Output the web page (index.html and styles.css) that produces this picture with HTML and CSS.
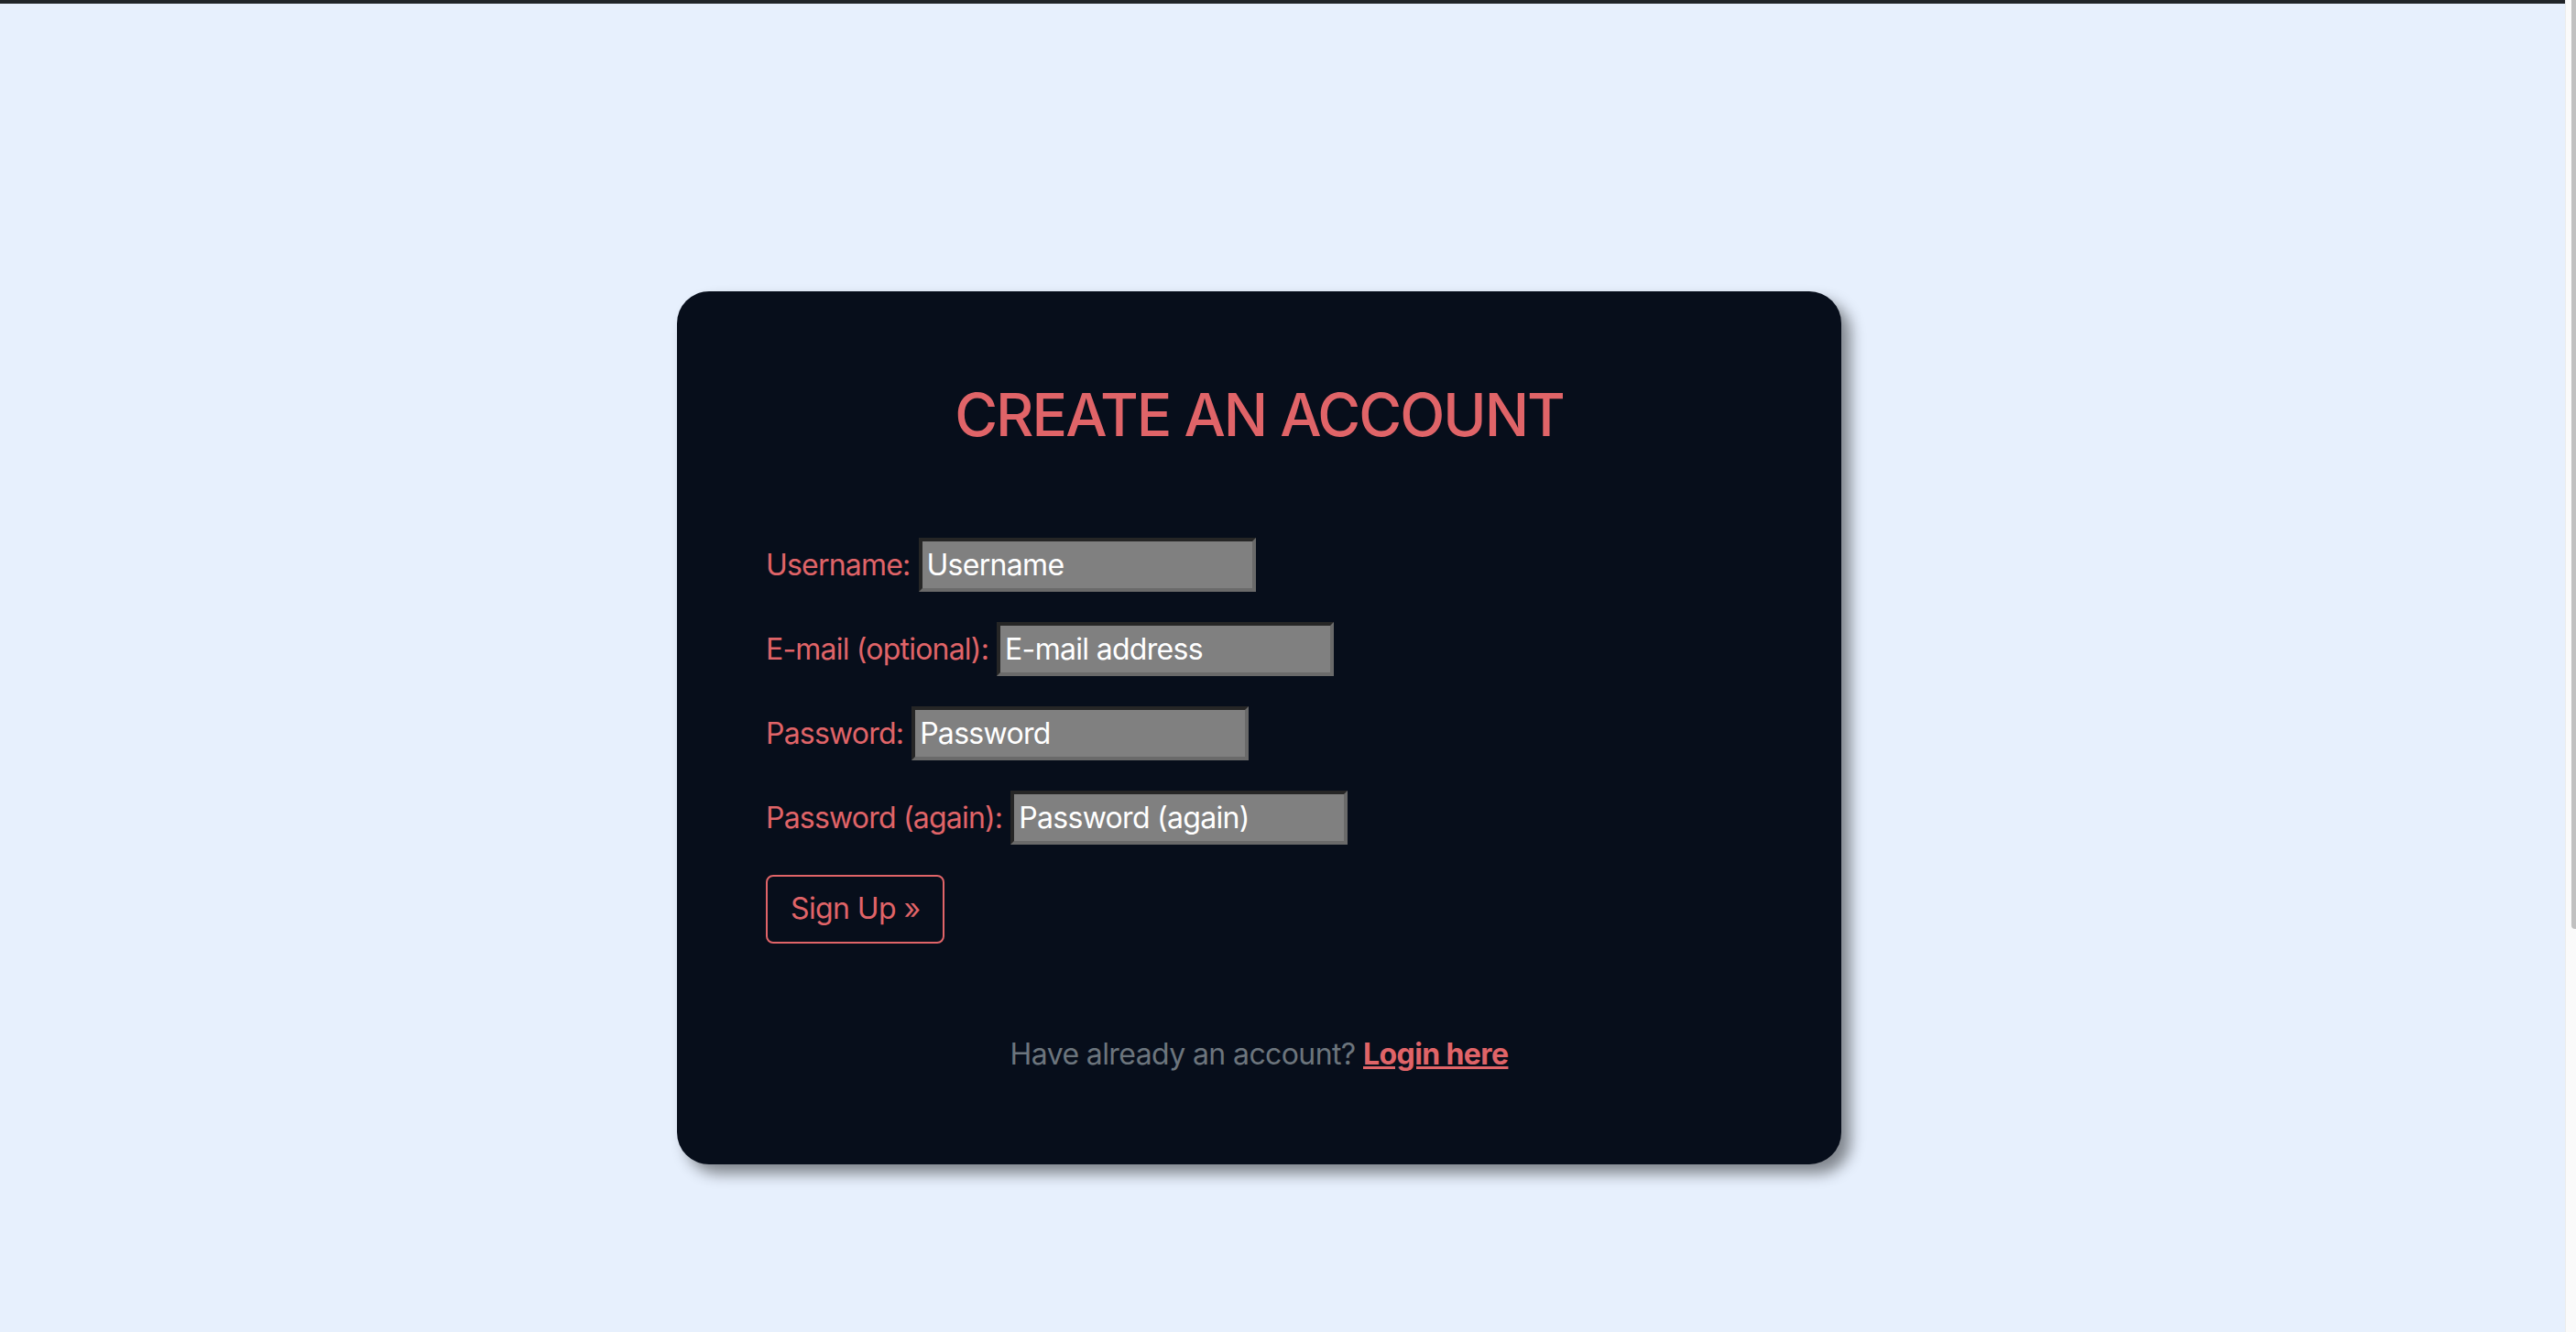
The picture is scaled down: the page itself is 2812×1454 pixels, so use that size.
FILE: index.html
```html
<!DOCTYPE html>
<html lang="en">
<head>
<meta charset="utf-8">
<title>Create an account</title>
<link rel="stylesheet" href="styles.css">
</head>
<body>
<div class="topbar"></div>
<main class="page">
  <section class="card">
    <h1 class="title">CREATE AN ACCOUNT</h1>
    <form class="form">
      <div class="row">
        <label class="label" for="u">Username:</label>
        <input class="field" id="u" type="text" value="Username">
      </div>
      <div class="row">
        <label class="label" for="e">E-mail (optional):</label>
        <input class="field" id="e" type="text" value="E-mail address">
      </div>
      <div class="row">
        <label class="label" for="p">Password:</label>
        <input class="field" id="p" type="text" value="Password">
      </div>
      <div class="row">
        <label class="label" for="p2">Password (again):</label>
        <input class="field" id="p2" type="text" value="Password (again)">
      </div>
      <div class="actions">
        <button class="btn" type="button">Sign Up &raquo;</button>
      </div>
    </form>
    <p class="footer">Have already an account? <a class="link" href="#">Login here</a></p>
  </section>
</main>
<div class="scrollbar"><div class="thumb"></div></div>
</body>
</html>
```
FILE: styles.css
```css
html, body {
  margin: 0;
  padding: 0;
}
body {
  background: #e7f0fd;
  font-family: Inter, "Noto Sans", "Liberation Sans", sans-serif;
  min-height: 1454px;
  overflow: hidden;
}
.topbar {
  height: 4px;
  background: #212529;
  margin-right: 12px;
}
.page {
  padding-top: 314px;
  padding-left: 739px;
}
.card {
  width: 1271px;
  box-sizing: border-box;
  background: #070e1b;
  border-radius: 35px;
  box-shadow: 10px 10px 16px rgba(0, 0, 0, 0.45);
  padding: 96px 97px 96px 97px;
}
.title {
  margin: 0;
  text-align: center;
  color: #e06468;
  font-size: 64px;
  font-weight: 500;
  line-height: 77px;
  letter-spacing: -2px;
}
.form {
  margin-top: 96px;
  display: flex;
  flex-direction: column;
  gap: 33px;
}
.row {
  display: flex;
  align-items: center;
  gap: 9px;
}
.label {
  color: #e06468;
  font-size: 32px;
  line-height: 48px;
  letter-spacing: -0.8px;
}
.field {
  width: 368px;
  height: 59px;
  box-sizing: border-box;
  background: #808080;
  color: #ffffff;
  font-family: inherit;
  font-size: 32px;
  letter-spacing: -0.7px;
  padding: 2px 5px;
  border-width: 4px;
  border-style: solid;
  border-color: #262626 #6a6a6a #6a6a6a #262626;
  outline: none;
}
.actions {
  display: flex;
}
.btn {
  background: transparent;
  color: #e06468;
  font-family: inherit;
  font-size: 32px;
  line-height: 48px;
  letter-spacing: -0.6px;
  border: 2px solid #e06468;
  border-radius: 8px;
  padding: 11px 25px 12px 25px;
  cursor: pointer;
}
.footer {
  margin: 97px 0 0 0;
  text-align: center;
  color: #6c757d;
  font-size: 32px;
  line-height: 48px;
  letter-spacing: -0.6px;
}
.link {
  color: #e06468;
  font-weight: 700;
  text-decoration: underline;
}
.scrollbar {
  position: fixed;
  top: 0;
  right: 0;
  width: 12px;
  height: 1454px;
  background: #fafafa;
  border-left: 1px solid #ececec;
  box-sizing: border-box;
}
.thumb {
  position: absolute;
  top: 0;
  right: 0;
  width: 5px;
  height: 1014px;
  background: #c1c1c1;
  border-radius: 0 0 0 4px;
}
```
